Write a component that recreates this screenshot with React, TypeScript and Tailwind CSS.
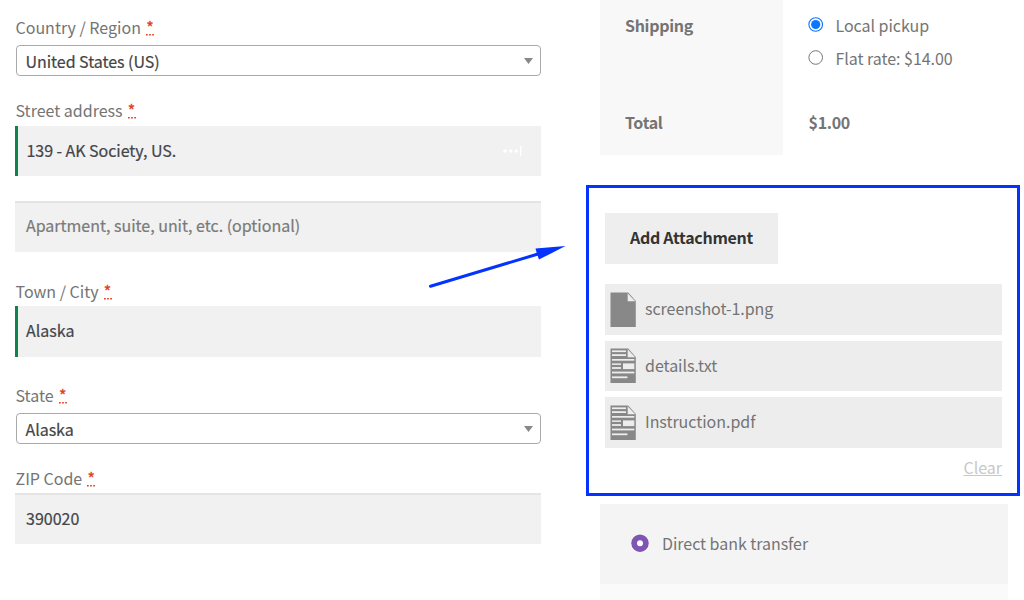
import type { ReactNode } from "react";

function Label({ children, className }: { children: ReactNode; className: string }) {
  return (
    <label className={`flex h-5 items-center gap-[5px] pl-[0.5px] text-[#747474] ${className}`}>
      <span>{children}</span>
      <span className="flex h-5 w-2 flex-col items-center text-[#e2401c]">
        <span className="h-[17px] [-webkit-text-stroke:0.3px]">*</span>
        <svg className="block h-[2px] w-2 shrink-0" viewBox="0 0 8 2" fill="#e2401c">
          <rect x="0" y="0" width="1.7" height="1.5" />
          <rect x="3.1" y="0" width="1.7" height="1.5" />
          <rect x="6.2" y="0" width="1.7" height="1.5" />
        </svg>
      </span>
    </label>
  );
}

function SelectBox({ value, className }: { value: string; className: string }) {
  return (
    <div
      className={`ml-[0.5px] flex h-[31px] w-[525.5px] items-center justify-between rounded border border-[#aaa] bg-white pr-[7px] pl-[9px] text-[#444] [-webkit-text-stroke:0.2px] ${className}`}
    >
      <span className="tracking-[-0.04px]">{value}</span>
      <svg className="h-[6px] w-[9px]" viewBox="0 0 9 6" fill="#888">
        <path d="M0 0h9L4.5 6z" />
      </svg>
    </div>
  );
}

function Field({ children, className }: { children: ReactNode; className: string }) {
  return (
    <div
      className={`flex w-[526px] items-center justify-between bg-[#f1f1f1] text-[#43454b] [-webkit-text-stroke:0.2px] ${className}`}
    >
      {children}
    </div>
  );
}

function FileIcon({ lined }: { lined?: boolean }) {
  return (
    <svg className="h-[35px] w-[26px] shrink-0" viewBox="0 0 26 35">
      <path d="M.5.5h17.7L25.8 9v26H.5z" fill="#888" />
      <path d="M17.7 1.3v8h7.5z" fill="#ededed" />
      {lined && (
        <g fill="#ededed">
          <rect x="2" y="2.4" width="14" height="1.7" />
          <rect x="2" y="6.2" width="14" height="1.8" />
          <rect x="2" y="11" width="22.3" height="1.7" />
          <rect x="2" y="15.4" width="9" height="1.5" />
          <rect x="2" y="19.1" width="9" height="1.8" />
          <rect x="13" y="15.4" width="11.3" height="5.7" />
          <rect x="2" y="23.6" width="22.3" height="1.8" />
          <rect x="2" y="28.4" width="15.4" height="1.8" />
        </g>
      )}
    </svg>
  );
}

const files = [
  { name: "screenshot-1.png", lined: false },
  { name: "details.txt", lined: true },
  { name: "Instruction.pdf", lined: true },
];

export default function App() {
  return (
    <main className="relative flex h-[600px] w-[1024px] overflow-hidden bg-white font-['Noto_Sans_CJK_SC','Noto_Sans',sans-serif] text-[16px] leading-5 whitespace-nowrap text-[#747474]">
      <form className="flex w-[586px] shrink-0 flex-col pl-[15px]">
        <Label className="mt-[17px]">Country / Region</Label>
        <SelectBox value="United States (US)" className="mt-2" />
        <Label className="mt-6">Street address</Label>
        <Field className="mt-[6px] h-[50px] border-l-[3px] border-[#0f834d] pr-[19px] pl-[8.5px]">
          <span className="pb-[2px] tracking-[-0.05px]">139 - AK Society, US.</span>
          <svg className="h-[10px] w-[19px]" viewBox="0 0 19 10" fill="white">
            <circle cx="2" cy="5" r="1.8" />
            <circle cx="7.7" cy="5" r="1.8" />
            <circle cx="13.2" cy="5" r="1.8" />
            <rect x="17" y="0" width="1.4" height="10" />
          </svg>
        </Field>
        <Field className="mt-[25px] h-[51px] border-t-2 border-[#e4e4e4] pl-[11px]">
          <span className="pb-[5px] tracking-[-0.02px] text-[#7a7a7a]">Apartment, suite, unit, etc. (optional)</span>
        </Field>
        <Label className="mt-[29px]">Town / City</Label>
        <Field className="mt-[5px] h-[51px] border-l-[3px] border-[#0f834d] pl-[8px]">
          <span className="pb-[3px]">Alaska</span>
        </Field>
        <Label className="mt-7">State</Label>
        <SelectBox value="Alaska" className="mt-2" />
        <Label className="mt-6">ZIP Code</Label>
        <Field className="mt-[5px] h-[51px] border-t-2 border-[#e4e4e4] pl-[11px]">
          <span className="pb-1">390020</span>
        </Field>
      </form>

      <div className="flex w-[434px] shrink-0 flex-col">
        <div className="ml-[14px] flex h-[155px] shrink-0">
          <div className="flex w-[183px] flex-col bg-[#f8f8f8] pt-[15px] pl-[25px] font-bold tracking-[-0.3px]">
            <span>Shipping</span>
            <span className="mt-[77px]">Total</span>
          </div>
          <div className="flex flex-col pt-[15px] pl-[25px]">
            <div className="flex items-center gap-[12.5px]">
              <svg className="-mt-[1px] h-[15px] w-[15px]" viewBox="0 0 15 15">
                <circle cx="7.7" cy="7.5" r="6.8" fill="white" stroke="#0b75ff" strokeWidth="1.1" />
                <circle cx="7.7" cy="7.5" r="4.6" fill="#0b75ff" />
              </svg>
              <span className="tracking-[-0.04px]">Local pickup</span>
            </div>
            <div className="mt-[13px] flex items-center gap-[12.5px]">
              <svg className="-mt-[1px] h-[15px] w-[15px]" viewBox="0 0 15 15">
                <circle cx="7.7" cy="7.5" r="6.8" fill="white" stroke="#777" />
              </svg>
              <span className="tracking-[-0.04px]">Flat rate: $14.00</span>
            </div>
            <span className="mt-11 pl-[0.5px] font-bold tracking-[-0.3px]">$1.00</span>
          </div>
        </div>

        <section className="mt-[30px] flex h-[311px] w-[434px] shrink-0 flex-col border-[3px] border-[#0433ff] pt-[25px] pr-[15px] pl-4">
          <button className="h-[51px] w-[173px] shrink-0 bg-[#eee] pb-[3px] font-bold tracking-[-0.28px] text-[#333]">
            Add Attachment
          </button>
          <ul className="mt-5 flex shrink-0 flex-col gap-[6px]">
            {files.map((file) => (
              <li key={file.name} className="flex h-[50.5px] items-center gap-[9px] bg-[#ededed] pl-[5px]">
                <FileIcon lined={file.lined} />
                <span className="pb-[2px] tracking-[-0.04px]">{file.name}</span>
              </li>
            ))}
          </ul>
          <a className="mt-[9px] self-end text-[#c8c8c8] underline">Clear</a>
        </section>

        <div className="mt-2 ml-[14px] flex h-20 w-[408px] shrink-0 items-center gap-[13px] bg-[#f4f4f4] pb-[2px] pl-[31px]">
          <svg className="h-[18px] w-[18px]" viewBox="0 0 18 18">
            <circle cx="9" cy="9.2" r="8.7" fill="#7f54b3" />
            <circle cx="9" cy="9.2" r="3" fill="white" />
          </svg>
          <span className="tracking-[-0.04px]">Direct bank transfer</span>
        </div>
        <div className="ml-[14px] h-4 w-[408px] shrink-0 bg-[#fafafa]" />
      </div>

      <svg className="absolute top-[240px] left-[424px] h-[54px] w-[146px]" viewBox="424 240 146 54">
        <path d="M430.5 286.3 538 254" stroke="#0433ff" strokeWidth="3" strokeLinecap="round" />
        <path d="M565.5 246 535.5 248.6 537 254 539 259.6z" fill="#0433ff" />
      </svg>
    </main>
  );
}
